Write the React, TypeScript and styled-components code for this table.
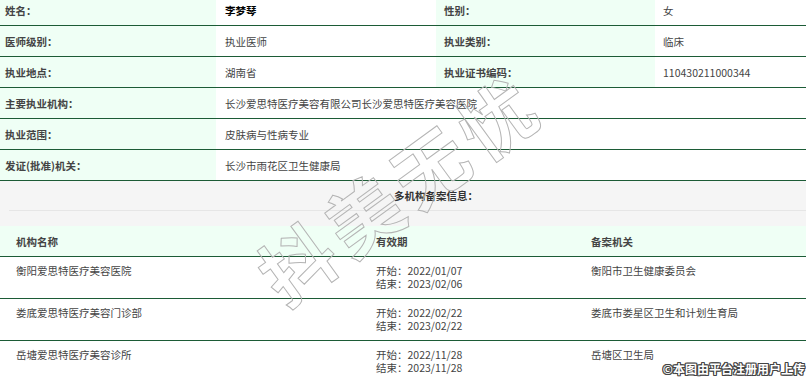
import React from 'react';
import styled, {createGlobalStyle} from 'styled-components';

interface InfoRow {
    label: string;
    value: string;
    strong?: boolean;
    label2?: string;
    value2?: string;
}

interface IRecord {
    name: string;
    start: string;
    end: string;
    organ: string;
}

const infoRows: InfoRow[] = [
    {label: '姓名：', value: '李梦琴', strong: true, label2: '性别：', value2: '女'},
    {label: '医师级别：', value: '执业医师', label2: '执业类别：', value2: '临床'},
    {label: '执业地点：', value: '湖南省', label2: '执业证书编码：', value2: '110430211000344'},
    {label: '主要执业机构：', value: '长沙爱思特医疗美容有限公司长沙爱思特医疗美容医院'},
    {label: '执业范围：', value: '皮肤病与性病专业'},
    {label: '发证(批准)机关：', value: '长沙市雨花区卫生健康局'}
];

const records: IRecord[] = [
    {name: '衡阳爱思特医疗美容医院', start: '2022/01/07', end: '2023/02/06', organ: '衡阳市卫生健康委员会'},
    {name: '娄底爱思特医疗美容门诊部', start: '2022/02/22', end: '2023/02/22', organ: '娄底市娄星区卫生和计划生育局'},
    {name: '岳塘爱思特医疗美容诊所', start: '2022/11/28', end: '2023/11/28', organ: '岳塘区卫生局'}
];

const GlobalStyle = createGlobalStyle`
    html, body {
        margin: 0;
        padding: 0;
        background: #fff;
    }

    body {
        font-family: "Noto Sans CJK SC", "Liberation Sans", sans-serif;
        font-size: 10.5px;
        color: #444;
        overflow: hidden;
    }
`;

const App = () => {
    return (
        <Page>
            <GlobalStyle />
            <InfoTable>
                {infoRows.map((row, index) => (
                    <Row key={index}>
                        <LabelCell>{row.label}</LabelCell>
                        <ValueCell $wide={!row.label2} $strong={row.strong}>
                            {row.value}
                        </ValueCell>
                        {row.label2 && (
                            <>
                                <LabelCell $second>{row.label2}</LabelCell>
                                <ValueCell $last>{row.value2}</ValueCell>
                            </>
                        )}
                    </Row>
                ))}
            </InfoTable>
            <Section>
                <SectionTitle>多机构备案信息：</SectionTitle>
            </Section>
            <RecordTable>
                <RecordHeader>
                    <div className='name'>机构名称</div>
                    <div className='period'>有效期</div>
                    <div className='organ'>备案机关</div>
                </RecordHeader>
                {records.map((record, index) => (
                    <RecordRow key={index}>
                        <div className='name'>{record.name}</div>
                        <div className='period'>
                            <div>开始：{record.start}</div>
                            <div>结束：{record.end}</div>
                        </div>
                        <div className='organ'>{record.organ}</div>
                    </RecordRow>
                ))}
            </RecordTable>
            <Watermark>抖美无忧</Watermark>
            <Credit>©本图由平台注册用户上传</Credit>
        </Page>
    );
};

export default App;

const Page = styled.main`
    position: relative;
    width: 806px;
    height: 379px;
    overflow: hidden;
`;

const InfoTable = styled.section`
    margin-top: -5px;
`;

const Row = styled.div`
    display: flex;
    height: 30px;
    border-bottom: 1px solid #1c5b36;
`;

const LabelCell = styled.div<{$second?: boolean}>`
    display: flex;
    width: ${(p) => (p.$second ? '219px' : '216px')};
    box-sizing: border-box;
    padding-left: ${(p) => (p.$second ? '8px' : '5px')};
    align-items: center;
    background: #effff5;
    color: #444;
    font-weight: bold;
`;

const ValueCell = styled.div<{$wide?: boolean; $strong?: boolean; $last?: boolean}>`
    display: flex;
    width: ${(p) => (p.$wide || p.$last ? 'auto' : '220px')};
    flex: ${(p) => (p.$wide || p.$last ? '1' : 'none')};
    box-sizing: border-box;
    padding-left: ${(p) => (p.$last ? '8px' : '9px')};
    align-items: center;
    color: ${(p) => (p.$strong ? '#000' : '#444')};
    font-weight: ${(p) => (p.$strong ? 'bold' : 'normal')};
`;

const Section = styled.section`
    padding: 0 0 15px 9px;
    background: #f5f5f5;
`;

const SectionTitle = styled.div`
    height: 29px;
    padding-left: 385px;
    line-height: 29px;
    border-bottom: 1px solid #e6e6e6;
    color: #333;
    font-weight: bold;
`;

const RecordTable = styled.section`
    .name {
        width: 360px;
        padding-left: 16px;
    }

    .period {
        width: 215px;
    }

    .organ {
        flex: 1;
    }
`;

const RecordHeader = styled.div`
    display: flex;
    height: 30px;
    align-items: center;
    border-bottom: 1px solid #1c5b36;
    background: #effff5;
    color: #444;
    font-weight: bold;
`;

const RecordRow = styled.div`
    display: flex;
    height: 34px;
    padding-top: 7px;
    line-height: 13px;
    border-bottom: 1px solid #1c5b36;
`;

const Watermark = styled.div`
    position: absolute;
    left: 398px;
    top: 186px;
    transform: translate(-50%, -50%) rotate(-36deg);
    color: transparent;
    font-size: 74px;
    font-weight: bold;
    letter-spacing: 8px;
    white-space: nowrap;
    -webkit-text-stroke: 1px #b4b4b4;
    pointer-events: none;
`;

const Credit = styled.div`
    position: absolute;
    right: 1px;
    bottom: 2px;
    color: #fff;
    font-size: 12px;
    font-weight: bold;
    text-shadow: 1px 0 #444, -1px 0 #444, 0 1px #444, 0 -1px #444, 1px 1px #444, -1px -1px #444, 1px -1px #444, -1px 1px #444;
`;
